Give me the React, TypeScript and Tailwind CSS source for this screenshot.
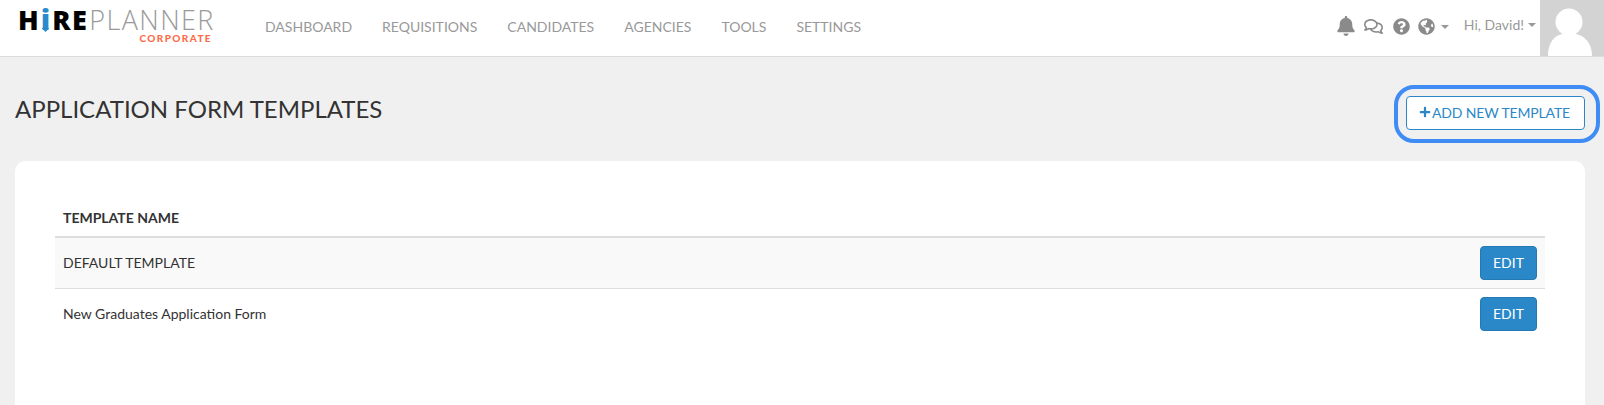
import { FaBell, FaRegComments, FaQuestionCircle, FaGlobeAmericas, FaPlus } from "react-icons/fa"

const navItems = ["Dashboard", "Requisitions", "Candidates", "Agencies", "Tools", "Settings"]

function Caret() {
    return <span className="inline-block w-0 h-0 border-x-[4px] border-x-transparent border-t-[4px] border-t-[#999]" />
}

function Logo() {
    return (
        <div className="w-[245px] pl-[18px] pt-[5px] flex flex-col items-start">
            <div className="flex items-baseline leading-[28px] text-[27px] h-[28px] font-['Open_Sans',sans-serif]">
                <span className="font-extrabold text-black">H</span>
                <span className="relative font-extrabold text-[#2b8acb] text-[29px] mx-[2px]">
                    i
                    <span className="absolute left-[2px] bottom-[2px] w-[5px] h-[5px] rotate-45 bg-[#2b8acb]" />
                </span>
                <span className="font-extrabold text-black tracking-[1.5px]">RE</span>
                <span className="font-light text-[#9a9a9a] tracking-[1.4px] ml-[1px]">PLANNER</span>
            </div>
            <div className="w-[194px] text-right text-[10px] leading-[10px] font-black tracking-[1.4px] text-[#ff6b4a]">CORPORATE</div>
        </div>
    )
}

function Header() {
    return (
        <div className="h-[57px] bg-white border-b border-[#dcdcdc] flex">
            <Logo />
            <nav className="flex items-start pl-[20px] pt-[17px] gap-[30px]">
                {navItems.map((item) => (
                    <a key={item} className="text-[14px] leading-[20px] uppercase text-[#999]">{item}</a>
                ))}
            </nav>
            <div className="ml-auto flex items-start">
                <div className="flex items-center h-[16px] mt-[18px] text-[#8a8a8a]">
                    <FaBell className="w-[20px] h-[20px]" />
                    <FaRegComments className="w-[19px] h-[19px] ml-[8px]" />
                    <FaQuestionCircle className="w-[17px] h-[17px] ml-[10px]" />
                    <FaGlobeAmericas className="w-[17px] h-[17px] ml-[8px]" />
                    <span className="ml-[6px] mt-[2px] flex"><Caret /></span>
                </div>
                <div className="flex items-center gap-[4px] mt-[15px] ml-[15px] mr-[4px] text-[14px] leading-[20px] text-[#999]">
                    Hi, David! <Caret />
                </div>
                <div className="w-[64px] h-[56px] bg-[#d3d3d3] overflow-hidden">
                    <svg viewBox="0 0 64 56" className="w-[64px] h-[56px]" fill="#fff">
                        <circle cx="29" cy="22" r="13.5" />
                        <path d="M8 56c0-14 7-23 21-23s23 9 23 23z" />
                    </svg>
                </div>
            </div>
        </div>
    )
}

function TemplateRow({ name, striped }: { name: string; striped?: boolean }) {
    return (
        <div className={`flex items-center justify-between pl-[8px] pr-[8px] text-[14px] text-[#333] ${striped ? "h-[51px] bg-[#f9f9f9] border-b border-[#ddd]" : "h-[50px]"}`}>
            <span className="mb-[2px]">{name}</span>
            <button className="w-[57px] h-[34px] pb-[2px] rounded-[4px] bg-[#2b88c8] border border-[#2479b3] text-white text-[14px]">EDIT</button>
        </div>
    )
}

export default function App() {
    return (
        <div className="h-[405px] overflow-hidden bg-[#f0f0f0] font-['Lato',sans-serif]">
            <Header />
            <div className="flex justify-between pl-[15px] pr-[19px]">
                <h1 className="mt-[38px] text-[24px] leading-[28px] text-[#333]">APPLICATION FORM TEMPLATES</h1>
                <div className="relative mt-[39px] h-[34px]">
                    <button className="flex items-center w-[179px] h-[34px] pb-[2px] pl-[12px] gap-[1px] bg-white border border-[#2b88c8] rounded-[4px] text-[14px] tracking-[-0.15px] text-[#2b88c8]">
                        <FaPlus className="w-[12px] h-[12px]" />
                        ADD NEW TEMPLATE
                    </button>
                    <div className="absolute left-[-12px] right-[-15px] top-[-11px] bottom-[-13px] border-[4px] border-[#3f8cf5] rounded-[20px]" />
                </div>
            </div>
            <div className="ml-[15px] mr-[19px] mt-[31px] bg-white rounded-[10px] h-[300px] px-[40px] pt-[47px]">
                <div className="h-[30px] pl-[8px] border-b-2 border-[#ddd] text-[14px] leading-[20px] font-bold text-[#333]">TEMPLATE NAME</div>
                <TemplateRow name="DEFAULT TEMPLATE" striped />
                <TemplateRow name="New Graduates Application Form" />
            </div>
        </div>
    )
}
